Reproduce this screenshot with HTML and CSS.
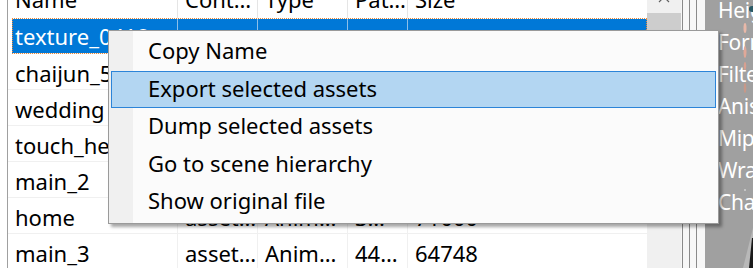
FILE: index.html
```html
<!DOCTYPE html>
<html lang="en">

<head>
    <meta charset="UTF-8">
    <title>Asset List</title>
    <link rel="stylesheet" href="styles.css">
</head>

<body>
    <div class="window">
        <div class="list">
            <div class="row header">
                <div class="cell">Name</div>
                <div class="cell">Cont…</div>
                <div class="cell">Type</div>
                <div class="cell">Pat…</div>
                <div class="cell">Size</div>
            </div>
            <div class="row selected">
                <div class="cell">texture_0418</div>
                <div class="cell"></div>
                <div class="cell"></div>
                <div class="cell"></div>
                <div class="cell"></div>
            </div>
            <div class="row">
                <div class="cell">chaijun_5</div>
                <div class="cell"></div>
                <div class="cell"></div>
                <div class="cell"></div>
                <div class="cell"></div>
            </div>
            <div class="row">
                <div class="cell">wedding</div>
                <div class="cell"></div>
                <div class="cell"></div>
                <div class="cell"></div>
                <div class="cell"></div>
            </div>
            <div class="row">
                <div class="cell">touch_heart</div>
                <div class="cell"></div>
                <div class="cell"></div>
                <div class="cell"></div>
                <div class="cell"></div>
            </div>
            <div class="row">
                <div class="cell">main_2</div>
                <div class="cell"></div>
                <div class="cell"></div>
                <div class="cell"></div>
                <div class="cell"></div>
            </div>
            <div class="row">
                <div class="cell">home</div>
                <div class="cell">asset…</div>
                <div class="cell">Anim…</div>
                <div class="cell">3…</div>
                <div class="cell">71000</div>
            </div>
            <div class="row">
                <div class="cell">main_3</div>
                <div class="cell">asset…</div>
                <div class="cell">Anim…</div>
                <div class="cell">44…</div>
                <div class="cell">64748</div>
            </div>
        </div>

        <div class="vscroll">
            <div class="scroll-up">
                <svg width="12" height="8" viewBox="0 0 12 8">
                    <path d="M1 6 L6 1 L11 6" fill="none" stroke="#606060" stroke-width="1.2"/>
                </svg>
            </div>
            <div class="thumb"></div>
        </div>

        <div class="splitter">
            <span class="grip"></span>
            <span class="grip"></span>
            <span class="grip"></span>
        </div>

        <div class="preview">
            <div class="prop">Height</div>
            <div class="prop">Format</div>
            <div class="prop">Filter</div>
            <div class="prop">Anisotropic</div>
            <div class="prop">Mipmap</div>
            <div class="prop">Wrap</div>
            <div class="prop">Channel</div>
            <svg class="art" width="12" height="268" viewBox="0 0 12 268">
                <circle cx="11" cy="9" r="3" fill="#2a5a66"/>
                <ellipse cx="4" cy="28" rx="1.5" ry="5" fill="#e8b8a8"/>
                <ellipse cx="4" cy="52" rx="1.5" ry="6" fill="#e0a898"/>
                <ellipse cx="4" cy="66" rx="1.2" ry="4" fill="#d8a090"/>
                <ellipse cx="4" cy="88" rx="1.2" ry="5" fill="#c89888"/>
                <circle cx="4" cy="190" r="1" fill="#d0d0d0"/>
                <path d="M2 268 L12 228 L12 268 Z" fill="#b8b8b8"/>
                <path d="M8 268 L11 238 L12 238 L12 268 Z" fill="#1a1a1a"/>
            </svg>
        </div>
    </div>

    <div class="menu">
        <div class="item">Copy Name</div>
        <div class="item active">Export selected assets</div>
        <div class="item">Dump selected assets</div>
        <div class="item">Go to scene hierarchy</div>
        <div class="item">Show original file</div>
    </div>
</body>

</html>
```

FILE: styles.css
```css
body {
    margin: 0;
    width: 753px;
    height: 268px;
    overflow: hidden;
    background: white;
    font-family: 'Noto Sans', 'Open Sans', sans-serif;
    font-size: 22px;
    color: #000;
    position: relative;
}

.window {
    display: flex;
    height: 268px;
}

/* list view */
.list {
    width: 639px;
    margin-left: 7px;
    border-left: 1px solid #a0a0a0;
    overflow: hidden;
}

.row {
    display: grid;
    grid-template-columns: 170px 80px 90px 60px 1fr;
    height: 36px;
    box-sizing: border-box;
    border-bottom: 1px solid #f0f0f0;
    white-space: nowrap;
}

.cell {
    padding-left: 7px;
    padding-top: 3px;
    line-height: 32px;
    overflow: hidden;
    border-right: 1px solid #f0f0f0;
}

.row .cell:last-child {
    border-right: none;
}

.header {
    margin-top: -18px;
    border-bottom: none;
}

.header .cell {
    padding-top: 0;
    line-height: 35px;
    border-right-color: #e5e5e5;
}

.selected {
    margin-left: 4px;
    grid-template-columns: 166px 80px 90px 60px 1fr;
    background: #0078d7;
    color: white;
    border-top: 1px solid white;
    outline: 1px dotted #e8893a;
    outline-offset: -1px;
}

.selected .cell {
    padding-top: 0;
    line-height: 34px;
    border-right-color: #8cbfe9;
}

.selected .cell:first-child {
    padding-left: 3px;
}

/* scrollbar */
.vscroll {
    width: 34px;
    background: #f0f0f0;
    display: flex;
    flex-direction: column;
}

.scroll-up {
    height: 13px;
    display: flex;
    justify-content: center;
    align-items: flex-start;
    margin-top: -4px;
    margin-bottom: 4px;
}

.thumb {
    height: 120px;
    background: #cdcdcd;
}

/* splitter between list and preview */
.splitter {
    width: 24px;
    background: #f7f7f7;
    display: flex;
    gap: 6px;
    padding-left: 1px;
    box-sizing: border-box;
}

.grip {
    width: 1px;
    background: #8a8a8a;
}

/* preview pane */
.preview {
    flex: 1;
    background: #a0a0a0;
    color: white;
    padding-left: 13px;
    font-size: 21px;
    letter-spacing: -0.3px;
    line-height: 32px;
    white-space: nowrap;
    overflow: hidden;
    position: relative;
}

.prop:first-child {
    margin-top: -6px;
}

.art {
    position: absolute;
    right: 0;
    top: 0;
}

/* context menu */
.menu {
    position: absolute;
    left: 108px;
    top: 30px;
    width: 609px;
    padding: 2px 0;
    border: 1px solid #9a9a9a;
    background: linear-gradient(to right, #f0f0f0 0, #f0f0f0 24px, #fbfbfb 24px);
    box-shadow: 3px 3px 3px rgba(0, 0, 0, 0.35);
}

.item {
    height: 37.6px;
    line-height: 33px;
    margin: 0 2px;
    padding-left: 36px;
    border: 1px solid transparent;
    box-sizing: border-box;
}

.item.active {
    background: #b3d6f2;
    border-color: #2c84d8;
}
```
